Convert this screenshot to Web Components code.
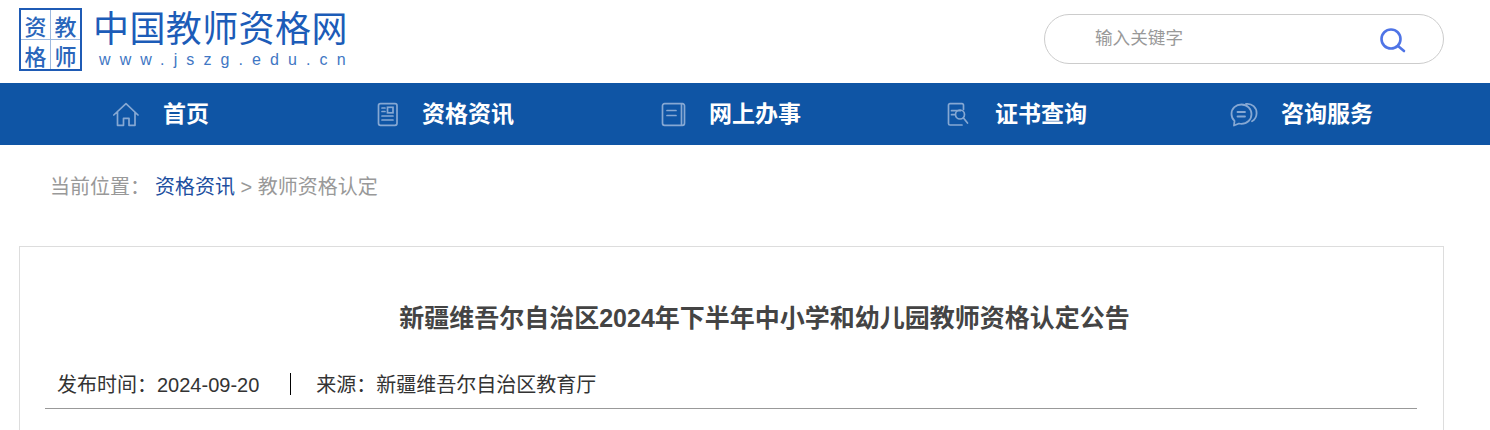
<!DOCTYPE html>
<html lang="zh-CN"><head><meta charset="utf-8"><title>中国教师资格网</title>
<style>
html,body{margin:0;height:430px;overflow:hidden;background:#fff}
body{font-family:"Liberation Sans","Noto Sans CJK SC",sans-serif}
</style></head><body>
<site-header></site-header>
<site-nav>
  <nav-item pad="94" gap="24" label="首页"><svg viewBox="0 0 26 26" fill="none" stroke="#86a8d3" stroke-width="1.7" stroke-linejoin="round" stroke-linecap="round"><path d="M.8 14 13 2.700 25 14M4.500 11v13.300h6v-7h5.500v7h6V11"/></svg></nav-item>
  <nav-item pad="72" gap="19" label="资格资讯"><svg viewBox="0 0 26 26" fill="none" stroke="#86a8d3" stroke-width="1.7" stroke-linecap="round"><rect x="1.500" y="2.700" width="18.500" height="21.600" rx="2"/><rect x="10.500" y="6.300" width="5.500" height="5.500"/><path d="M5 7h3M5 10.500h3M5 15h11M5 19h11"/></svg></nav-item>
  <nav-item pad="70" gap="22" label="网上办事"><svg viewBox="0 0 26 26" fill="none" stroke="#86a8d3" stroke-width="1.7" stroke-linecap="round"><path d="M3.500 2.700h18a2 2 0 0 1 2 2v17.600a2 2 0 0 1-2 2h-18a2 2 0 0 1-2-2V4.700a2 2 0 0 1 2-2zM20.500 3v21"/><path d="M6 9.500h9M6 14.500h9"/></svg></nav-item>
  <nav-item pad="69" gap="23" label="证书查询"><svg viewBox="0 0 26 26" fill="none" stroke="#86a8d3" stroke-width="1.7" stroke-linecap="round"><path d="M17.500 8.500V4.200A1.500 1.500 0 0 0 16 2.700H4A1.500 1.500 0 0 0 2.500 4.200v18.300A1.500 1.500 0 0 0 4 24h12"/><path d="M5.500 9.700h9M5.500 13.700h3"/><circle cx="14" cy="13.500" r="4.500"/><path d="m17.500 17 4 5"/></svg></nav-item>
  <nav-item pad="67" gap="23" label="咨询服务" wide><svg viewBox="0 0 28 26" fill="none" stroke="#86a8d3" stroke-width="1.8" stroke-linecap="round" stroke-linejoin="round"><path d="M11.500 3.500C5.800 3.500 1.500 7.500 1.500 13c0 3 1.200 5.200 3 6.800L4 24.500l5-2c.8.200 1.700.3 2.500.3 5.700 0 10-4.300 10-9.600S17.200 3.500 11.500 3.500z"/><path d="M7.500 11h7.500M7.500 15.500h7.500"/><path d="M16 3c6-.8 10.800 3.500 10.600 9.300-.1 3.500-2 6.500-4.600 8"/></svg></nav-item>
</site-nav>
<bread-crumb></bread-crumb>
<article-card></article-card>
<script>
function make(name, html){
  customElements.define(name, class extends HTMLElement{
    constructor(){super();this.attachShadow({mode:"open"}).innerHTML=html(this);}
  });
}
make("site-header",()=>`<style>
:host{display:flex;height:83px;box-sizing:border-box;justify-content:space-between;align-items:flex-start;padding:8px 46px 0 19px}
</style><site-logo></site-logo><search-box></search-box>`);
make("site-logo",()=>`<style>
:host{display:flex;gap:11px;color:#1f5fb8}
.box{width:63px;height:63px;box-sizing:border-box;border:2px solid #1f5bb5;display:grid;grid-template:1fr 1fr/1fr 1fr;gap:1px;background:#9db9df;font:500 22px/1 "Noto Sans CJK SC",sans-serif;color:#2a66bb}
.box span{background:#fff;display:flex;align-items:center;justify-content:center}
.name{display:flex;flex-direction:column}
.cn{font:400 36px/40px "Noto Sans CJK SC",sans-serif;letter-spacing:.4px;white-space:nowrap;color:#1c5cb8;margin-top:-2px}
.en{font:16px/20px "Liberation Sans",sans-serif;letter-spacing:9.100px;color:#3f77c4;margin:4px 0 0 6px;white-space:nowrap}
</style><div class="box"><span>资</span><span>教</span><span>格</span><span>师</span></div>
<div class="name"><div class="cn">中国教师资格网</div><div class="en">www.jszg.edu.cn</div></div>`);
make("search-box",()=>`<style>
:host{display:flex;align-items:center;justify-content:space-between;width:400px;height:50px;box-sizing:border-box;border:1px solid #ccc;border-radius:25px;margin-top:6px;padding:0 37px 0 50px;font-size:17.600px;color:#999}
span{margin-top:-5px}
svg{width:27px;height:27px;display:block;margin-top:2px}
</style><span>输入关键字</span><svg viewBox="0 0 27 27" fill="none" stroke="#4f74e6" stroke-width="2.600" stroke-linecap="round"><circle cx="12" cy="12" r="9.500"/><path d="m19 19 6 5"/></svg>`);
make("site-nav",()=>`<style>
:host{display:grid;grid-template-columns:repeat(5,286px);height:62px;background:#0f55a5;padding-left:19px}
</style><slot></slot>`);
make("nav-item",(el)=>`<style>
:host{display:flex;align-items:center;font-size:23px;font-weight:700;color:#fff;white-space:nowrap;padding-left:${el.getAttribute("pad")}px;gap:${el.getAttribute("gap")}px}
::slotted(svg){width:${el.hasAttribute("wide")?28:26}px;height:26px;display:block;flex:none}
span{margin-top:-5px}
</style><slot></slot><span>${el.getAttribute("label")}</span>`);
make("bread-crumb",()=>`<style>
:host{display:block;padding:30px 0 0 50px;height:101px;box-sizing:border-box;font-size:20px;line-height:24px;color:#999;white-space:nowrap}
a{color:#1d4f9f;text-decoration:none;margin-left:5px}
</style>当前位置&#xFF1A;<a>资格资讯</a> &gt; 教师资格认定`);
make("article-card",()=>`<style>
:host{display:block;margin:0 46px 0 19px;border:1px solid #ddd;box-sizing:border-box;height:400px;padding:0 26px 0 25px}
h1{margin:0;padding:56px 0 0 67px;font-size:25px;line-height:30px;font-weight:700;color:#444;text-align:center}
.meta{display:flex;align-items:center;height:48px;box-sizing:border-box;margin-top:28px;border-bottom:1px solid #999;padding:0 0 3px 12px;font-size:20px;color:#333;white-space:nowrap}
.sep{width:1px;height:22px;background:#000;margin:2px 25px 0 31px}
</style><h1>新疆维吾尔自治区2024年下半年中小学和幼儿园教师资格认定公告</h1>
<div class="meta"><span>发布时间&#xFF1A;2024-09-20</span><i class="sep"></i><span>来源&#xFF1A;新疆维吾尔自治区教育厅</span></div>`);
</script>
</body></html>
